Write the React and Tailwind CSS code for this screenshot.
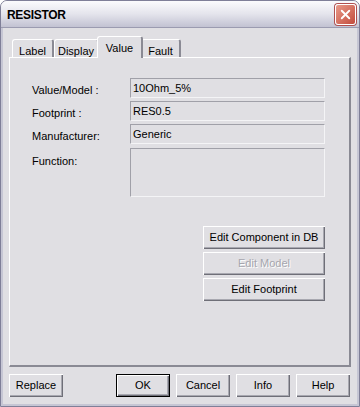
import { X } from "lucide-react";

const font = { fontFamily: '"Liberation Sans", Arial, sans-serif' };

const btn =
  "h-[23px] bg-[#e0dfe3] text-[11px] flex items-center justify-center shadow-[inset_1px_1px_0_#ffffff,inset_-1px_-1px_0_#6f6f78,inset_-2px_-2px_0_#a8a8b0]";

function Field({ label, value, tall, className = "" }) {
  return (
    <div className={"flex items-start " + className}>
      <div className={"w-[98px] text-[11px] " + (tall ? "pt-[5px]" : "pt-[4px]")}>{label}</div>
      <div
        className={
          "w-[195px] border-t border-l border-t-[#a0a0a8] border-l-[#a0a0a8] border-b border-r border-b-[#f4f4f6] border-r-[#f4f4f6] text-[11px] pl-[2px] pt-[1px] " +
          (tall ? "h-[49px]" : "h-[20px]")
        }
      >
        {value}
      </div>
    </div>
  );
}

function Tab({ children, active }) {
  if (active) {
    return (
      <div className="relative z-10 -ml-[2px] -mr-[2px] mb-[-1px] h-[22px] w-[46px] bg-[#e0dfe3] border-t border-l border-t-white border-l-white border-r-2 border-r-[#8a8a94] rounded-t-[3px] text-[11px] flex justify-center pt-[3px]">
        {children}
      </div>
    );
  }
  return (
    <div className="h-[18px] bg-[#e0dfe3] border-t border-l border-t-white border-l-white border-r-2 border-r-[#8a8a94] rounded-t-[3px] text-[11px] flex justify-center pt-[3px]">
      {children}
    </div>
  );
}

export default function App() {
  return (
    <div
      style={font}
      className="w-[360px] h-[407px] bg-[#e0dfe3] text-black flex flex-col rounded-t-[7px] border-[1px] border-[#7f7f98] overflow-hidden"
    >
      {/* TITLE BAR */}
      <div className="h-[27px] shrink-0 bg-gradient-to-b from-[#fbfbfd] via-[#e4e4ec] to-[#c2c2d2] flex items-center pl-[6px] pr-[3px] border-b border-[#9b9bb0]">
        <div className="font-bold text-[12px] tracking-[-0.3px] flex-1 pt-[1px]">RESISTOR</div>
        <div className="w-[21px] h-[21px] rounded-[3px] border border-white bg-gradient-to-br from-[#e89a8a] to-[#c24a3c] flex items-center justify-center shadow-[0_0_0_1px_#b05050]">
          <X className="w-[15px] h-[15px] text-white" strokeWidth={3} />
        </div>
      </div>

      {/* BODY */}
      <div className="flex-1 flex flex-col border-l-2 border-r-2 border-b-2 border-[#c6c6d4] px-[6px]">
        {/* TABS */}
        <div className="flex items-end pl-[3px] h-[29px]">
          <div className="w-[42px]"><Tab>Label</Tab></div>
          <div className="w-[45px]"><Tab>Display</Tab></div>
          <Tab active>Value</Tab>
          <div className="w-[40px]"><Tab>Fault</Tab></div>
        </div>

        {/* PANEL */}
        <div className="h-[310px] border-t border-l border-t-white border-l-white border-r-2 border-b-2 border-r-[#8a8a94] border-b-[#8a8a94] flex flex-col items-start pl-[22px] pt-[20px]">
          <Field label="Value/Model :" value="10Ohm_5%" />
          <Field label="Footprint :" value="RES0.5" className="mt-[2px]" />
          <Field label="Manufacturer:" value="Generic" className="mt-[3px]" />
          <Field label="Function:" value="" tall className="mt-[3px]" />
          <div className="mt-[29px] ml-[171px] flex flex-col gap-[3px] w-[122px]">
            <div className={btn + " w-[122px] text-black"}>Edit Component in DB</div>
            <div className={btn + " w-[122px] text-[#a6a6ae] [text-shadow:1px_1px_0_#ffffff]"}>Edit Model</div>
            <div className={btn + " w-[122px] text-black"}>Edit Footprint</div>
          </div>
        </div>

        {/* BOTTOM BUTTONS */}
        <div className="flex mt-[7px]">
          <div className={btn + " w-[54px]"}>Replace</div>
          <div className="ml-[53px] w-[54px] h-[23px] border border-black">
            <div className={btn + " w-full h-full"}>OK</div>
          </div>
          <div className={btn + " w-[54px] ml-[6px]"}>Cancel</div>
          <div className={btn + " w-[54px] ml-[6px]"}>Info</div>
          <div className={btn + " w-[54px] ml-[6px]"}>Help</div>
        </div>
      </div>
    </div>
  );
}
